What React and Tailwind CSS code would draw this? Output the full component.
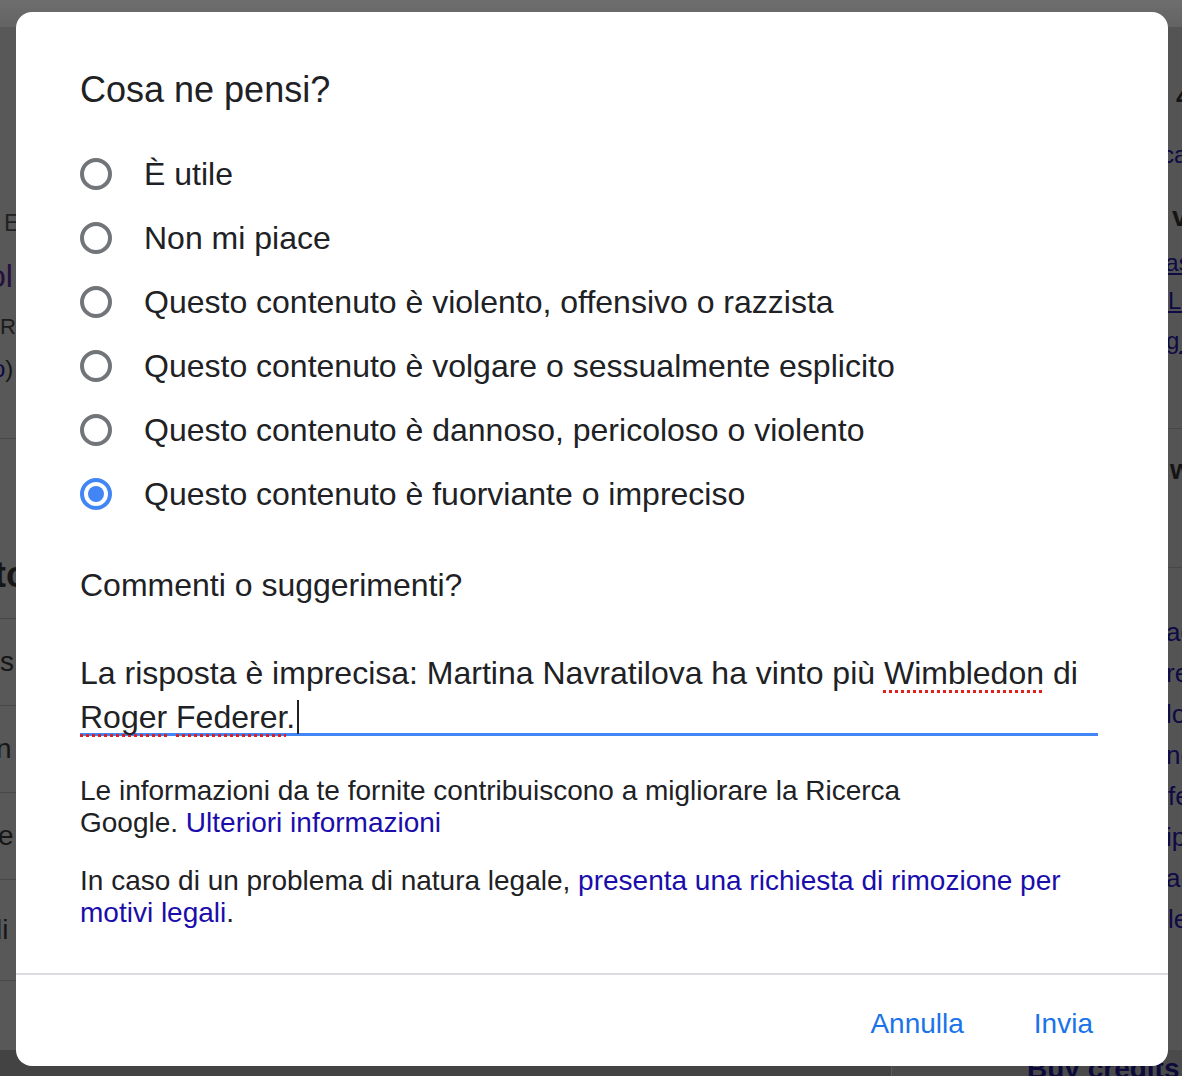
import React from "react";

const font = { fontFamily: '"Liberation Sans", Arial, Helvetica, sans-serif' };

function Radio({ checked }) {
  if (checked) {
    return (
      <span className="flex h-[32px] w-[32px] shrink-0 items-center justify-center rounded-full border-[4px] border-[#4285f4]">
        <span className="h-[16px] w-[16px] rounded-full bg-[#4285f4]" />
      </span>
    );
  }
  return <span className="h-[32px] w-[32px] shrink-0 rounded-full border-[4px] border-[#717579]" />;
}

const options = [
  "È utile",
  "Non mi piace",
  "Questo contenuto è violento, offensivo o razzista",
  "Questo contenuto è volgare o sessualmente esplicito",
  "Questo contenuto è dannoso, pericoloso o violento",
  "Questo contenuto è fuorviante o impreciso",
];

function Line() {
  return <div className="h-px w-full bg-[#474747]" />;
}

function Spell({ children }) {
  return (
    <span className="underline decoration-[#e0201c] decoration-dotted decoration-[3px] underline-offset-[6px] [text-decoration-skip-ink:none]">
      {children}
    </span>
  );
}

function Background() {
  return (
    <div className="flex h-full flex-col">
      <div className="h-[27px] shrink-0 bg-gradient-to-b from-[#6e6e6e] to-[#636363]" />
      <div className="flex flex-1 justify-between">
        {/* left column fragments */}
        <div className="flex w-[16px] flex-col overflow-hidden bg-[#585858] text-[#161616]">
          <div className="h-[183px] shrink-0" />
          <div className="h-[26px] shrink-0 whitespace-nowrap pl-[4px] text-[24px] leading-[26px] text-[#222]">E</div>
          <div className="h-[24px] shrink-0" />
          <div className="ml-[-12px] h-[32px] shrink-0 whitespace-nowrap text-[32px] leading-[32px] text-[#23103f]">ol</div>
          <div className="h-[24px] shrink-0" />
          <div className="h-[22px] shrink-0 whitespace-nowrap text-[22px] leading-[22px] text-[#1c1c1c]">Re</div>
          <div className="h-[18px] shrink-0" />
          <div className="ml-[-8px] h-[26px] shrink-0 whitespace-nowrap text-[24px] leading-[26px]">
            <span className="text-[#0d0a44]">o</span>)
          </div>
          <div className="h-[56px] shrink-0" />
          <Line />
          <div className="h-[118px] shrink-0" />
          <div className="ml-[-6px] h-[36px] shrink-0 whitespace-nowrap text-[36px] font-bold leading-[36px]">to</div>
          <div className="h-[25px] shrink-0" />
          <Line />
          <div className="flex h-[86px] shrink-0 items-center whitespace-nowrap text-[28px]">s</div>
          <Line />
          <div className="ml-[-4px] flex h-[86px] shrink-0 items-center whitespace-nowrap text-[28px]">n</div>
          <Line />
          <div className="ml-[-2px] flex h-[86px] shrink-0 items-center whitespace-nowrap text-[28px]">e</div>
          <Line />
          <div className="ml-[-4px] flex h-[100px] shrink-0 items-center whitespace-nowrap text-[28px]">li</div>
          <Line />
        </div>
        {/* right column fragments */}
        <div className="flex w-[60px] flex-col overflow-hidden bg-[#545454] text-[#141414]">
          <div className="h-[55px] shrink-0" />
          <div className="h-[30px] shrink-0 whitespace-nowrap pl-[54px] text-[28px] font-bold leading-[30px]">4</div>
          <div className="h-[30px] shrink-0" />
          <div className="h-[26px] shrink-0 whitespace-nowrap pl-[40px] text-[24px] leading-[26px] text-[#0d0a44]">ca</div>
          <div className="h-[34px] shrink-0" />
          <div className="h-[30px] shrink-0 whitespace-nowrap pl-[50px] text-[28px] font-bold leading-[30px]">v</div>
          <div className="h-[18px] shrink-0" />
          <div className="h-[26px] shrink-0 whitespace-nowrap pl-[30px] text-[24px] leading-[26px] text-[#0d0a44] underline">_as</div>
          <div className="h-[12px] shrink-0" />
          <div className="h-[26px] shrink-0 whitespace-nowrap pl-[46px] text-[24px] leading-[26px] text-[#0d0a44] underline">Lin</div>
          <div className="h-[14px] shrink-0" />
          <div className="h-[26px] shrink-0 whitespace-nowrap pl-[44px] text-[24px] leading-[26px] text-[#0d0a44] underline">g_l</div>
          <div className="h-[74px] shrink-0" />
          <Line />
          <div className="h-[26px] shrink-0" />
          <div className="h-[30px] shrink-0 whitespace-nowrap pl-[48px] text-[28px] font-bold leading-[30px]">w</div>
          <div className="h-[82px] shrink-0" />
          <Line />
          <div className="h-[44px] shrink-0" />
          <div className="flex flex-col whitespace-nowrap text-[26px] leading-[41px] text-[#0d0a44]">
            <div className="pl-[44px]">ad</div>
            <div className="pl-[44px]">re</div>
            <div className="pl-[44px]">lo</div>
            <div className="pl-[44px]">no</div>
            <div className="pl-[46px]">fe</div>
            <div className="pl-[44px]">ip</div>
            <div className="pl-[44px]">an</div>
            <div className="pl-[46px]">le</div>
          </div>
        </div>
      </div>
      <div className="flex h-[26px] shrink-0">
        <div className="w-[892px] shrink-0 border-r border-[#5a5a5a] bg-[#434343]" />
        <div className="flex-1 overflow-hidden bg-[#4a4a4a]">
          <div className="ml-[135px] mt-[4px] whitespace-nowrap text-[28px] font-bold leading-[30px] text-[#0b0a3a]">
            Buy credits to
          </div>
        </div>
      </div>
    </div>
  );
}

export default function App() {
  return (
    <div className="relative h-[1076px] w-[1182px] overflow-hidden bg-[#545454]" style={font}>
      <Background />
      <div className="absolute inset-0 pl-[16px] pt-[12px]">
        <div className="flex h-[1054px] w-[1152px] flex-col rounded-[16px] bg-white text-[#202124]">
          <div className="pl-[64px] pr-[70px]">
            <h2 className="pt-[58px] text-[36px] font-normal leading-[40px]">Cosa ne pensi?</h2>
            <div className="mt-[32px] flex flex-col">
              {options.map((o, i) => (
                <label key={o} className="flex h-[64px] items-center gap-[32px] text-[32px]">
                  <Radio checked={i === options.length - 1} />
                  <span>{o}</span>
                </label>
              ))}
            </div>
            <div className="mt-[39px] text-[32px] leading-[40px]">Commenti o suggerimenti?</div>
            <div className="mt-[46px] border-b-[3px] border-[#4285f4]">
              <div className="h-[82px] text-[32px] leading-[44px]">
                La risposta è imprecisa: Martina Navratilova ha vinto più <Spell>Wimbledon</Spell> di
                <br />
                <Spell>Roger</Spell> <Spell>Federer</Spell>
                .<span className="ml-[2px] inline-block h-[34px] w-[2px] bg-[#202124] align-[-6px]" />
              </div>
            </div>
            <p className="mt-[39px] text-[28px] leading-[32px]">
              Le informazioni da te fornite contribuiscono a migliorare la Ricerca
              <br />
              Google. <span className="text-[#1a0dab]">Ulteriori informazioni</span>
            </p>
            <p className="mt-[26px] text-[28px] leading-[32px]">
              In caso di un problema di natura legale,{" "}
              <span className="text-[#1a0dab]">presenta una richiesta di rimozione per</span>
              <br />
              <span className="text-[#1a0dab]">motivi legali</span>.
            </p>
          </div>
          <div className="flex-1" />
          <div className="h-[2px] bg-[#dadce0]" />
          <div className="flex h-[91px] items-center justify-end gap-[70px] pr-[75px] pt-[6px] text-[28px] text-[#1a73e8]">
            <button className="leading-[32px]">Annulla</button>
            <button className="leading-[32px]">Invia</button>
          </div>
        </div>
      </div>
    </div>
  );
}
